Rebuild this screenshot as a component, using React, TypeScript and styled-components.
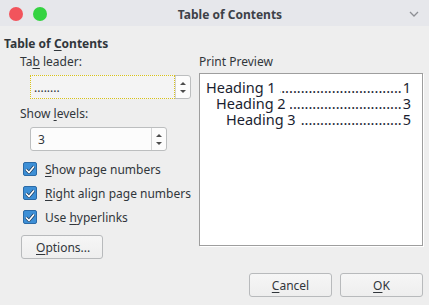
import React from 'react';
import styled, { createGlobalStyle } from 'styled-components';

const GlobalStyle = createGlobalStyle`
	html, body {
		margin: 0;
		padding: 0;
		background: #eeeeee;
	}
	body {
		font-family: 'Noto Sans', 'Open Sans', sans-serif;
		font-size: 12px;
		color: #31363b;
	}
`;

const headings = [
	{ text: 'Heading 1', page: '1', level: 0, dots: 34 },
	{ text: 'Heading 2', page: '3', level: 1, dots: 31 },
	{ text: 'Heading 3', page: '5', level: 2, dots: 29 },
];

const Window = styled.div`
	width: 429px;
	height: 305px;
	display: flex;
	flex-direction: column;
	background: #eeeeee;
	overflow: hidden;
`;

const TitleBar = styled.div`
	height: 26px;
	flex: none;
	display: flex;
	align-items: center;
	background: #e6e7eb;
	padding: 0 9px;
	box-sizing: border-box;
`;

const Light = styled.span<{ color: string }>`
	width: 14px;
	height: 14px;
	border-radius: 50%;
	background: ${({ color }) => color};
	margin-right: 10px;
	margin-top: 2px;
`;

const Title = styled.div`
	flex: 1;
	text-align: center;
	font-weight: 700;
	font-size: 12px;
	color: #3d4148;
	padding-right: 6px;
	margin-top: 2px;
`;

const Chevron = styled.svg`
	width: 10px;
	height: 6px;
	margin-right: 1px;
	margin-top: 2px;
`;

const Section = styled.div`
	font-weight: 700;
	font-size: 12px;
	line-height: 18px;
	margin: 9px 0 0 4px;
	color: #31363b;
`;

const Columns = styled.div`
	display: flex;
	padding-left: 20px;
`;

const Left = styled.div`
	width: 179px;
	display: flex;
	flex-direction: column;
`;

const Right = styled.div`
	width: 224px;
	display: flex;
	flex-direction: column;
`;

const Label = styled.div<{ gap?: number }>`
	line-height: 18px;
	margin-top: ${({ gap }) => gap ?? 0}px;
`;

const U = styled.span`
	text-decoration: underline;
	text-underline-offset: 2px;
`;

const Field = styled.div<{ width: number }>`
	display: flex;
	width: ${({ width }) => width}px;
	height: 24px;
	margin: 4px 0 0 10px;
	box-sizing: border-box;
	background: #fcfcfc;
	border: 1px solid #bcbebf;
	border-radius: 3px;
`;

const FieldText = styled.div<{ focused?: boolean }>`
	flex: 1;
	display: flex;
	align-items: center;
	padding-left: ${({ focused }) => (focused ? 3 : 7)}px;
	font-size: 12px;
	margin: ${({ focused }) => (focused ? '-1px 0 -1px -1px' : '0')};
	border: ${({ focused }) => (focused ? '1px dotted #222' : 'none')};
	background: ${({ focused }) => (focused ? '#f4f4f4' : 'transparent')};
	outline: ${({ focused }) => (focused ? '1px dotted #d8c21a' : 'none')};
	outline-offset: -1px;
`;

const Spin = styled.div`
	width: 14px;
	border-left: 1px solid #d4d5d6;
	display: flex;
	flex-direction: column;
	align-items: center;
	justify-content: center;
	gap: 5px;
`;

const Arrow = styled.span<{ down?: boolean }>`
	width: 0;
	height: 0;
	border-left: 3px solid transparent;
	border-right: 3px solid transparent;
	${({ down }) =>
		down ? 'border-top: 3px solid #4d4d4d;' : 'border-bottom: 3px solid #4d4d4d;'}
`;

const Checks = styled.div`
	display: flex;
	flex-direction: column;
	margin: 6px 0 0 3px;
`;

const CheckRow = styled.div`
	height: 24px;
	display: flex;
	align-items: center;
`;

const Box = styled.span`
	width: 14px;
	height: 14px;
	box-sizing: border-box;
	border: 1px solid #2b6aa6;
	border-radius: 2px;
	background: #3d8fd6;
	display: flex;
	align-items: center;
	justify-content: center;
	margin-right: 8px;
`;

const Button = styled.div<{ width: number }>`
	width: ${({ width }) => width}px;
	height: 24px;
	box-sizing: border-box;
	border: 1px solid #b8babc;
	border-radius: 3px;
	background: linear-gradient(#f6f6f6, #eeeeee);
	display: flex;
	align-items: center;
	justify-content: center;
	font-size: 12px;
	color: #31363b;
`;

const OptionsButton = styled(Button)`
	margin: 6px 0 0 1px;
	justify-content: flex-start;
	padding-left: 14px;
`;

const Preview = styled.div`
	margin-top: 2px;
	height: 173px;
	box-sizing: border-box;
	border: 1px solid #9e9e9e;
	background: #ffffff;
	box-shadow: 1px 1px 0 #ffffff;
	padding: 5px 11px 0 6px;
	font-size: 14.5px;
	color: #1a1e30;
`;

const Line = styled.div<{ level: number }>`
	display: flex;
	height: 16px;
	line-height: 16px;
	padding-left: ${({ level }) => level * 10}px;
	white-space: nowrap;
`;

const Leader = styled.span`
	flex: 1;
	min-width: 0;
	overflow: hidden;
	direction: rtl;
	margin: 0 1px 0 4px;
`;

const Footer = styled.div`
	display: flex;
	justify-content: flex-end;
	gap: 8px;
	padding: 14px 6px 0 0;
`;

const Check = () => (
	<svg width="10" height="9" viewBox="0 0 10 9">
		<path d="M1 4.5 L4 7.5 L9 1.5" fill="none" stroke="#1b3a5c" strokeWidth="3" />
		<path d="M1 4.5 L4 7.5 L9 1.5" fill="none" stroke="#ffffff" strokeWidth="1.6" />
	</svg>
);

const App = () => {
	return (
		<>
			<GlobalStyle />
			<Window>
				<TitleBar>
					<Light color="#f2545c" />
					<Light color="#35d342" />
					<Title>Table of Contents</Title>
					<Chevron viewBox="0 0 10 6">
						<path d="M1 1 L5 5 L9 1" fill="none" stroke="#8d8f94" strokeWidth="1.3" />
					</Chevron>
				</TitleBar>

				<Section>
					Table of <U>C</U>ontents
				</Section>

				<Columns>
					<Left>
						<Label>
							Ta<U>b</U> leader:
						</Label>
						<Field width={161}>
							<FieldText focused>........</FieldText>
							<Spin>
								<Arrow />
								<Arrow down />
							</Spin>
						</Field>

						<Label gap={6}>
							Show <U>l</U>evels:
						</Label>
						<Field width={137}>
							<FieldText>3</FieldText>
							<Spin>
								<Arrow />
								<Arrow down />
							</Spin>
						</Field>

						<Checks>
							<CheckRow>
								<Box>
									<Check />
								</Box>
								<span>
									<U>S</U>how page numbers
								</span>
							</CheckRow>
							<CheckRow>
								<Box>
									<Check />
								</Box>
								<span>
									<U>R</U>ight align page numbers
								</span>
							</CheckRow>
							<CheckRow>
								<Box>
									<Check />
								</Box>
								<span>
									Use <U>h</U>yperlinks
								</span>
							</CheckRow>
						</Checks>

						<OptionsButton width={82}>
							<span>
								<U>O</U>ptions...
							</span>
						</OptionsButton>
					</Left>

					<Right>
						<Label>Print Preview</Label>
						<Preview>
							{headings.map((h) => (
								<Line key={h.text} level={h.level}>
									<span>{h.text}</span>
									<Leader>{'.'.repeat(h.dots)}</Leader>
									<span>{h.page}</span>
								</Line>
							))}
						</Preview>
					</Right>
				</Columns>

				<Footer>
					<Button width={83}>
						<span>
							<U>C</U>ancel
						</span>
					</Button>
					<Button width={83}>
						<span>
							<U>O</U>K
						</span>
					</Button>
				</Footer>
			</Window>
		</>
	);
};

export default App;
